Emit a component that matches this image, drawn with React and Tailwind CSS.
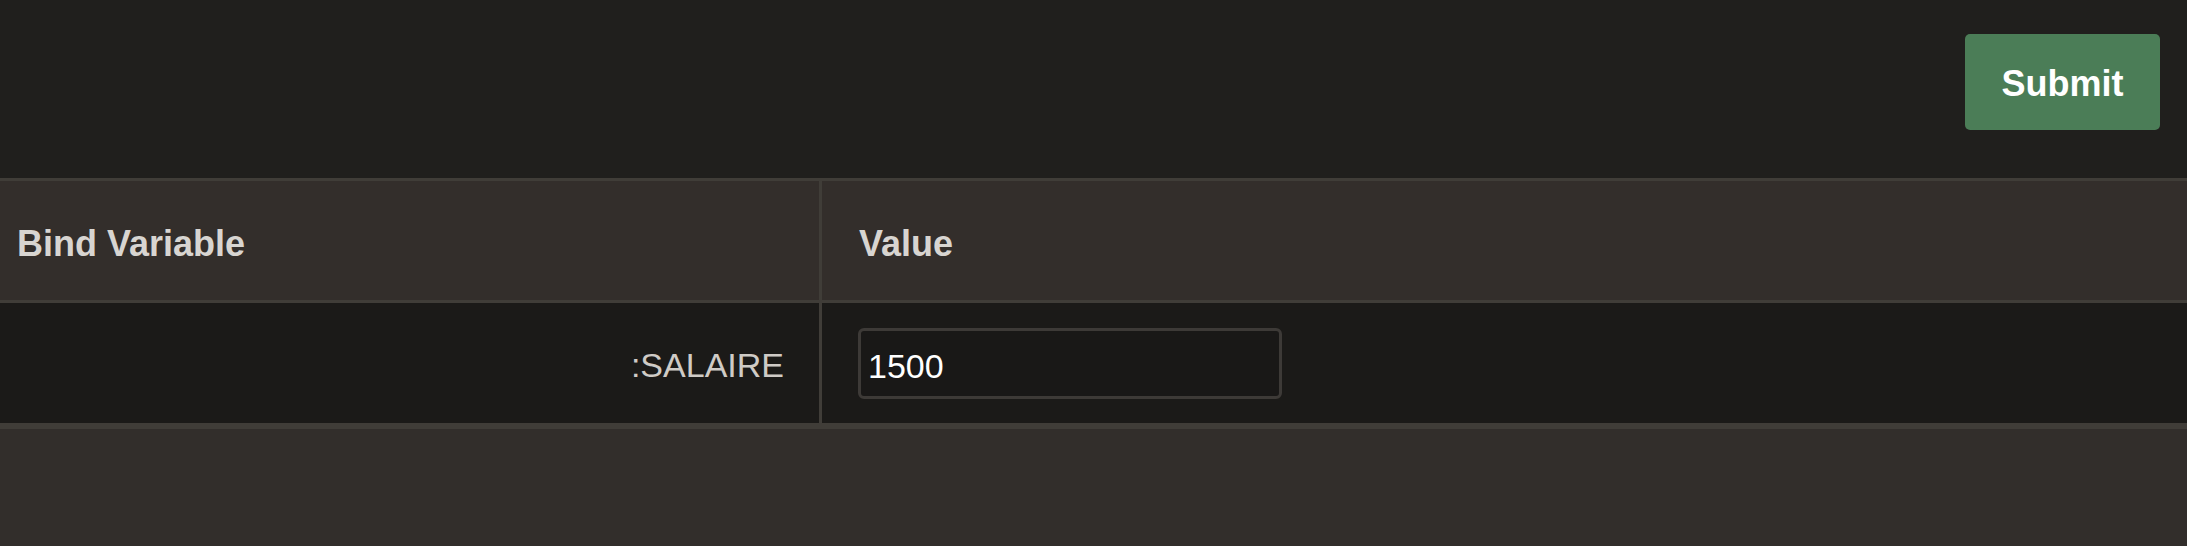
export default function App() {
  return (
    <div className="w-full min-h-[546px] bg-[#322e2b] font-['Liberation_Sans',Arial,sans-serif]">
      <div className="h-[178px] bg-[#201f1d] flex justify-end items-start pt-[34px] pr-[27px]">
        <button className="h-[96px] w-[195px] rounded-[5px] bg-[#4b7d57] text-white font-bold text-[36px] leading-[40px] pt-[3px] flex items-center justify-center">
          Submit
        </button>
      </div>
      <div className="border-t-[3px] border-b-[6px] border-[#403d38]">
        <div className="flex h-[122px] bg-[#332e2b] border-b-[3px] border-[#403d38]">
          <div className="w-[822px] shrink-0 border-r-[3px] border-[#403d38] flex items-center pl-[17px] pt-[6px] text-[36px] leading-[40px] font-bold text-[#d8d5d1]">
            Bind Variable
          </div>
          <div className="flex-1 flex items-center pl-[37px] pt-[6px] text-[36px] leading-[40px] font-bold text-[#d8d5d1]">
            Value
          </div>
        </div>
        <div className="flex h-[120px] bg-[#1b1a18]">
          <div className="w-[822px] shrink-0 border-r-[3px] border-[#403d38] flex items-center justify-end pr-[35px] pt-[4px] text-[34px] leading-[38px] text-[#cfcbc6]">
            :SALAIRE
          </div>
          <div className="flex-1 flex items-center pl-[36px]">
            <div className="w-[424px] h-[71px] border-[3px] border-[#3d3a37] rounded-[6px] bg-[#191817] text-white text-[34px] leading-[38px] pl-[7px] pt-[5px] flex items-center">
              1500
            </div>
          </div>
        </div>
      </div>
    </div>
  );
}
